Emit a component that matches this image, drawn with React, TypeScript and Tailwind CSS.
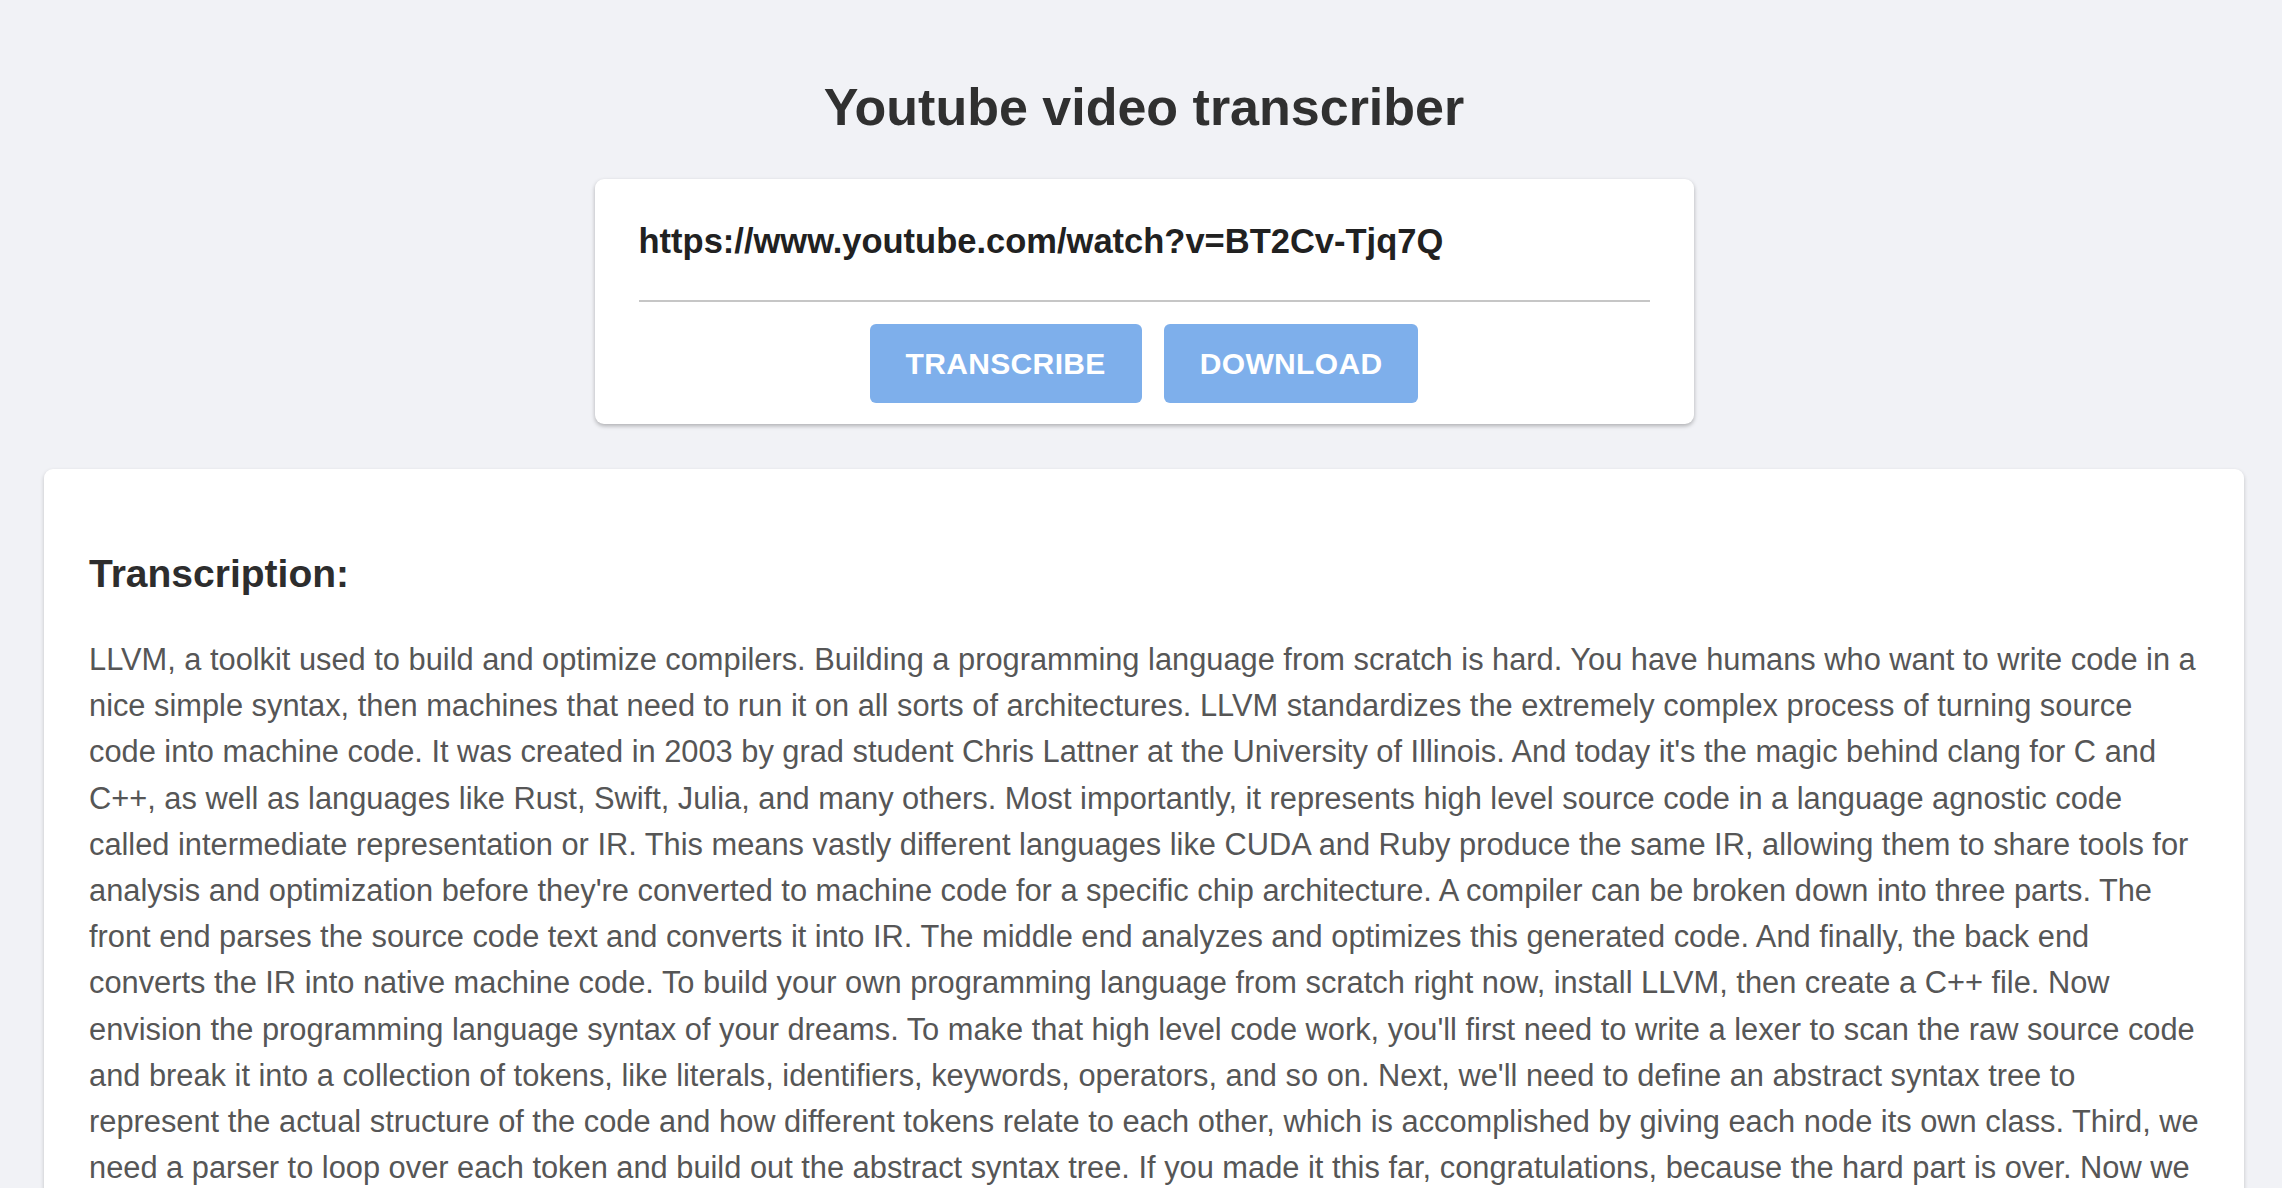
import { useState } from "react"

const transcript =
  "LLVM, a toolkit used to build and optimize compilers. Building a programming language from scratch is hard. You have humans who want to write code in a nice simple syntax, then machines that need to run it on all sorts of architectures. LLVM standardizes the extremely complex process of turning source code into machine code. It was created in 2003 by grad student Chris Lattner at the University of Illinois. And today it's the magic behind clang for C and C++, as well as languages like Rust, Swift, Julia, and many others. Most importantly, it represents high level source code in a language agnostic code called intermediate representation or IR. This means vastly different languages like CUDA and Ruby produce the same IR, allowing them to share tools for analysis and optimization before they're converted to machine code for a specific chip architecture. A compiler can be broken down into three parts. The front end parses the source code text and converts it into IR. The middle end analyzes and optimizes this generated code. And finally, the back end converts the IR into native machine code. To build your own programming language from scratch right now, install LLVM, then create a C++ file. Now envision the programming language syntax of your dreams. To make that high level code work, you'll first need to write a lexer to scan the raw source code and break it into a collection of tokens, like literals, identifiers, keywords, operators, and so on. Next, we'll need to define an abstract syntax tree to represent the actual structure of the code and how different tokens relate to each other, which is accomplished by giving each node its own class. Third, we need a parser to loop over each token and build out the abstract syntax tree. If you made it this far, congratulations, because the hard part is over. Now we can import a bunch of LLVM primitives to generate the intermediate representation. Each type in the abstract syntax tree is given a method called codegen, which always returns an LLVM value object used to represent a single assignment register, which is a variable for the compiler that can only be assigned once. What's interesting about these IR primitives is that, unlike assembly, they're independent of any particular machine architecture. And that dramatically simplifies things for language developers who no longer need to match their output to a processor's instruction set."

function ActionButton({ label }: { label: string }) {
  return (
    <button className="h-[79px] px-[36px] rounded-[6px] bg-[#7eafeb] text-white text-[30px] font-bold uppercase tracking-[0.35px] leading-none">
      {label}
    </button>
  )
}

export default function App() {
  const [url, setUrl] = useState("https://www.youtube.com/watch?v=BT2Cv-Tjq7Q")

  return (
    <div className="min-h-screen bg-[#f1f2f6] pl-[44px] pr-[38px] pt-[77px] font-['Liberation_Sans',Arial,sans-serif]">
      <h1 className="text-center text-[52px] leading-[60px] font-bold text-[#303030]">
        Youtube video transcriber
      </h1>

      <div className="mx-auto mt-[42px] w-[1099px] rounded-[9px] bg-white px-[44px] pt-[42px] pb-[21px] shadow-[0_2px_4px_rgba(0,0,0,0.28)]">
        <input
          value={url}
          onChange={(e) => setUrl(e.target.value)}
          className="block w-full bg-transparent text-[34.5px] leading-[40px] font-bold text-[#212121] outline-none"
        />
        <div className="mt-[39px] h-[2px] bg-[#c6c6c6]" />
        <div className="mt-[22px] flex justify-center gap-[22px]">
          <ActionButton label="Transcribe" />
          <ActionButton label="Download" />
        </div>
      </div>

      <div className="mt-[45px] rounded-[9px] bg-white px-[45px] pt-[83px] pb-[60px] shadow-[0_2px_4px_rgba(0,0,0,0.2)]">
        <h2 className="text-[39px] leading-[44px] font-bold text-[#2d2d2d]">Transcription:</h2>
        <p className="mt-[41px] text-[30.8px] leading-[46.2px] text-[#565656]">{transcript}</p>
      </div>
    </div>
  )
}
